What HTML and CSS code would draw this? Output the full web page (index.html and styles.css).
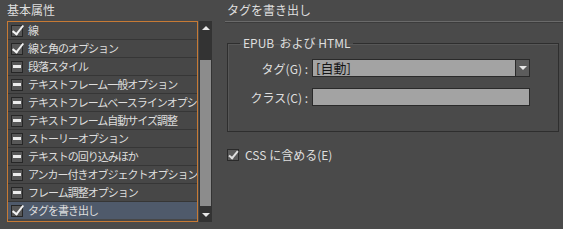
FILE: index.html
```html
<!DOCTYPE html>
<html lang="ja">
<head>
  <meta charset="UTF-8" />
  <title>タグを書き出し</title>
  <link rel="stylesheet" href="styles.css">
</head>
<body>
  <div class="dialog">
    <section class="left">
      <h2 class="panel-title">基本属性</h2>
      <div class="list-wrap">
        <ul class="cat-list">
          <li><span class="box check"></span>線</li>
          <li><span class="box check"></span>線と角のオプション</li>
          <li><span class="box dash"></span>段落スタイル</li>
          <li><span class="box dash"></span>テキストフレーム一般オプション</li>
          <li><span class="box dash"></span><span class="clip">テキストフレームベースラインオプシ</span></li>
          <li><span class="box dash"></span>テキストフレーム自動サイズ調整</li>
          <li><span class="box dash"></span>ストーリーオプション</li>
          <li><span class="box dash"></span>テキストの回り込みほか</li>
          <li><span class="box dash"></span>アンカー付きオブジェクトオプション</li>
          <li><span class="box dash"></span>フレーム調整オプション</li>
          <li class="selected"><span class="box check"></span>タグを書き出し</li>
        </ul>
        <div class="scrollbar">
          <span class="arrow up"></span>
          <div class="track"><div class="thumb"></div></div>
          <span class="arrow down"></span>
        </div>
      </div>
    </section>

    <section class="right">
      <h2 class="panel-title main-title">タグを書き出し</h2>
      <fieldset class="group">
        <legend>EPUB&nbsp; および HTML</legend>
        <div class="form-row">
          <label>タグ(G) :</label>
          <div class="select">
            <span class="select-value">[自動]</span>
            <span class="select-btn"></span>
          </div>
        </div>
        <div class="form-row">
          <label>クラス(C) :</label>
          <div class="textfield"></div>
        </div>
      </fieldset>
      <div class="css-option">
        <span class="small-check"></span>CSS に含める(E)
      </div>
    </section>
  </div>
</body>
</html>
```

FILE: styles.css
```css
html, body {
  margin: 0;
  padding: 0;
  height: 100%;
  background: #4a4a4a;
  color: #dedede;
  font-family: "Noto Sans CJK JP", "Noto Sans", sans-serif;
}

.dialog {
  display: flex;
  height: 229px;
}

.panel-title {
  margin: 0;
  font-weight: normal;
  font-size: 12px;
  line-height: 20px;
  height: 21px;
}

/* left side */
.left {
  width: 225px;
  padding-left: 7px;
  box-sizing: border-box;
}

.list-wrap {
  display: flex;
  height: 201px;
}

.cat-list {
  list-style: none;
  margin: 0;
  padding: 0;
  width: 189px;
  border: 1px solid #c77a35;
  overflow: hidden;
  background: #474747;
}

.cat-list li {
  height: 17px;
  border-bottom: 1px solid #363636;
  display: flex;
  align-items: center;
  white-space: nowrap;
  font-size: 11px;
  letter-spacing: -1px;
  line-height: 17px;
}

.cat-list li:last-child {
  border-bottom: none;
}

.cat-list li.selected {
  background: #4f5a6b;
}

.clip {
  overflow: hidden;
  min-width: 0;
}

.box {
  flex: none;
  width: 12px;
  height: 12px;
  margin: 0 5px 0 3px;
  background: #575757;
  border: 1px solid #262626;
  box-sizing: border-box;
  position: relative;
}

.box.dash::after {
  content: "";
  position: absolute;
  left: 1px;
  right: 1px;
  top: 3px;
  height: 3px;
  background: #ececec;
}

.box.check::after {
  content: "";
  position: absolute;
  left: 3px;
  top: -3px;
  width: 4px;
  height: 10px;
  border: solid #f4f4f4;
  border-width: 0 2px 2px 0;
  transform: rotate(38deg);
}

.scrollbar {
  width: 13px;
  margin-left: 1px;
  background: #333333;
  display: flex;
  flex-direction: column;
  align-items: center;
}

.arrow {
  flex: none;
  width: 0;
  height: 0;
  border-left: 4px solid transparent;
  border-right: 4px solid transparent;
  margin: 5px 0;
}

.arrow.up {
  border-bottom: 4px solid #e8e8e8;
}

.arrow.down {
  border-top: 4px solid #e8e8e8;
}

.track {
  flex: 1;
  width: 100%;
  display: flex;
  flex-direction: column;
  justify-content: flex-end;
  padding: 0 1px 2px;
  box-sizing: border-box;
}

.thumb {
  height: 146px;
  background: #8c8c8c;
}

/* right side */
.right {
  flex: 1;
}

.main-title {
  padding-left: 2px;
  border-bottom: 1px solid #6a6a6a;
  box-shadow: 0 1px 0 #3c3c3c;
}

.group {
  margin: 14px 4px 0 2px;
  padding: 9px 0 25px;
  border: 1px solid #2e2e2e;
  box-shadow: inset 1px 1px 0 #575757;
}

.group legend {
  margin-left: 12px;
  padding: 0 3px;
  font-size: 12px;
  line-height: 14px;
}

.form-row {
  display: flex;
  align-items: center;
  margin-bottom: 11px;
}

.form-row:last-child {
  margin-bottom: 0;
}

.form-row label {
  width: 80px;
  text-align: right;
  font-size: 12px;
  margin-right: 4px;
}

.select, .textfield {
  width: 218px;
  height: 18px;
  box-sizing: border-box;
  border: 1px solid #2a2a2a;
  background: #a3a3a3;
}

.select {
  display: flex;
}

.select-value {
  flex: 1;
  color: #151515;
  font-size: 13px;
  line-height: 16px;
  padding-left: 3px;
}

.select-btn {
  width: 13px;
  background: #5c5c5c;
  border-left: 1px solid #2a2a2a;
  display: flex;
  align-items: center;
  justify-content: center;
}

.select-btn::after {
  content: "";
  border-left: 4px solid transparent;
  border-right: 4px solid transparent;
  border-top: 4px solid #e8e8e8;
}

.css-option {
  display: flex;
  align-items: center;
  margin: 14px 0 0 2px;
  font-size: 12px;
}

.small-check {
  width: 12px;
  height: 12px;
  box-sizing: border-box;
  border: 1px solid #2a2a2a;
  background: #5a5a5a;
  margin-right: 6px;
  position: relative;
}

.small-check::after {
  content: "";
  position: absolute;
  left: 3px;
  top: -1px;
  width: 3px;
  height: 8px;
  border: solid #e0e0e0;
  border-width: 0 2px 2px 0;
  transform: rotate(40deg);
}
```
